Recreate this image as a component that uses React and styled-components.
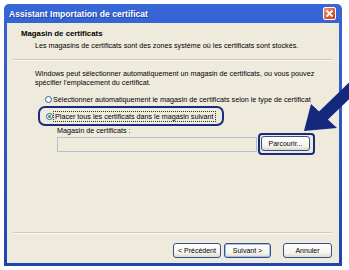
import React from "react";
import styled, { createGlobalStyle } from "styled-components";

const GlobalStyle = createGlobalStyle`
  html, body {
    margin: 0;
    padding: 0;
    background: #ffffff;
  }
  body {
    font-family: "Liberation Sans", Arial, sans-serif;
    font-size: 7.2px;
    color: #000;
  }
`;

const Stage = styled.div`
  position: relative;
  width: 349px;
  height: 270px;
  padding: 4px;
  box-sizing: border-box;
  overflow: hidden;
`;

const Window = styled.div`
  width: 338px;
  height: 262px;
  box-sizing: border-box;
  border-radius: 5px 5px 0 0;
  display: flex;
  flex-direction: column;
  padding: 0 3px 3px 3px;
  background: linear-gradient(#3766d6 0%, #2b56c6 50%, #1f45b4 100%);
`;

const TitleBar = styled.div`
  height: 19px;
  display: flex;
  align-items: center;
  justify-content: space-between;
  padding: 0 3px 0 2px;
`;

const Title = styled.span`
  color: #fff;
  font-weight: bold;
  font-size: 8.6px;
  text-shadow: 1px 1px 0 rgba(10, 30, 100, 0.5);
`;

const CloseButton = styled.div`
  width: 13px;
  height: 13px;
  box-sizing: border-box;
  border: 1px solid #fff;
  border-radius: 2px;
  background: linear-gradient(135deg, #f39a72, #dc5530 60%, #c8431f);
  display: flex;
  align-items: center;
  justify-content: center;
`;

const Body = styled.div`
  flex: 1;
  background: #eeebdd;
  display: flex;
  flex-direction: column;
`;

const Header = styled.div`
  height: 36px;
  box-sizing: border-box;
  padding: 6px 0 0 14px;
`;

const HeaderTitle = styled.div`
  font-weight: bold;
  font-size: 7.8px;
  line-height: 10px;
`;

const HeaderSub = styled.div`
  margin-top: 2px;
  padding-left: 14px;
  line-height: 10px;
`;

const Rule = styled.div`
  margin: 0 7px 0 6px;
  height: 1px;
  background: #cdcabb;
  border-bottom: 1px solid #fbfaf5;
`;

const Content = styled.div`
  flex: 1;
  padding: 8px 0 0 28px;
  display: flex;
  flex-direction: column;
`;

const Para = styled.p`
  margin: 0;
  line-height: 9px;
  width: 290px;
`;

const Options = styled.div`
  margin-top: 7px;
  display: flex;
  flex-direction: column;
  gap: 2px;
`;

const Option = styled.label`
  display: inline-flex;
  align-items: center;
  gap: 1px;
  align-self: flex-start;
  height: ${(p) => (p.$highlight ? "20px" : "10px")};
  box-sizing: border-box;
  margin-left: ${(p) => (p.$highlight ? "3px" : "10px")};
  padding: ${(p) => (p.$highlight ? "0 7px 0 6px" : "0")};
  border: ${(p) => (p.$highlight ? "2px solid #1a2b80" : "none")};
  border-radius: 7px;
  white-space: nowrap;
`;

const Radio = styled.span`
  width: 7px;
  height: 7px;
  box-sizing: border-box;
  border: 1px solid #2a5a9a;
  border-radius: 50%;
  background: #fff;
  display: flex;
  align-items: center;
  justify-content: center;
  &::after {
    content: "";
    width: 3px;
    height: 3px;
    border-radius: 50%;
    background: ${(p) => (p.$checked ? "#2aa52a" : "transparent")};
  }
`;

const FocusText = styled.span`
  outline: ${(p) => (p.$focus ? "1px dotted #333" : "none")};
  line-height: 9px;
  padding: 0 1px;
`;

const StoreBlock = styled.div`
  margin-left: 22px;
`;

const FieldLabel = styled.div`
  line-height: 10px;
`;

const FieldRow = styled.div`
  display: flex;
  align-items: center;
  gap: 1px;
  margin-top: 1px;
`;

const Input = styled.div`
  width: 200px;
  height: 15px;
  box-sizing: border-box;
  border: 1px solid #b3c0d4;
  background: #eeebdd;
`;

const Highlight = styled.div`
  border: 2px solid #1a2b80;
  border-radius: 4px;
  padding: 1px 3px 2px 1px;
  margin: -4px 0 -3px;
`;

const Button = styled.div`
  width: ${(p) => p.$w}px;
  height: 15px;
  box-sizing: border-box;
  border: 1px solid #36508a;
  border-radius: 3px;
  background: linear-gradient(#ffffff, #f4f3ee 70%, #dcd8cc);
  display: flex;
  align-items: center;
  justify-content: center;
  font-size: 7px;
  box-shadow: ${(p) => (p.$def ? "inset 0 0 0 1px #a6c0ec" : "none")};
`;

const Footer = styled.div`
  height: 29px;
  box-sizing: border-box;
  display: flex;
  justify-content: flex-end;
  align-items: flex-start;
  padding: 9px 7px 0 0;
  gap: 3px;
`;

const Spacer = styled.div`
  width: 6px;
`;

const Arrow = styled.svg`
  position: absolute;
  left: 296px;
  top: 74px;
`;

export default function App() {
  return (
    <>
      <GlobalStyle />
      <Stage>
        <Window>
          <TitleBar>
            <Title>Assistant Importation de certificat</Title>
            <CloseButton>
              <svg width="9" height="9" viewBox="0 0 9 9">
                <path d="M1.5 1.5 L7.5 7.5 M7.5 1.5 L1.5 7.5" stroke="#fff" strokeWidth="1.8" />
              </svg>
            </CloseButton>
          </TitleBar>
          <Body>
            <Header>
              <HeaderTitle>Magasin de certificats</HeaderTitle>
              <HeaderSub>
                Les magasins de certificats sont des zones système où les certificats sont stockés.
              </HeaderSub>
            </Header>
            <Rule />
            <Content>
              <Para>
                Windows peut sélectionner automatiquement un magasin de certificats, ou vous pouvez
                spécifier l'emplacement du certificat.
              </Para>
              <Options>
                <Option>
                  <Radio />
                  <span>Sélectionner automatiquement le magasin de certificats selon le type de certificat</span>
                </Option>
                <Option $highlight>
                  <Radio $checked />
                  <FocusText $focus>Placer tous les certificats dans le magasin suivant</FocusText>
                </Option>
              </Options>
              <StoreBlock>
                <FieldLabel>Magasin de certificats :</FieldLabel>
                <FieldRow>
                  <Input />
                  <Highlight>
                    <Button $w={49}>Parcourir...</Button>
                  </Highlight>
                </FieldRow>
              </StoreBlock>
            </Content>
            <Rule />
            <Footer>
              <Button $w={48}>&lt; Précédent</Button>
              <Button $w={47} $def>Suivant &gt;</Button>
              <Spacer />
              <Button $w={49}>Annuler</Button>
            </Footer>
          </Body>
        </Window>
        <Arrow width="53" height="64" viewBox="0 0 53 64">
          <line x1="27" y1="42" x2="58" y2="12" stroke="#14287e" strokeWidth="12" />
          <polygon points="8,57 15,30 41,54" fill="#14287e" />
        </Arrow>
      </Stage>
    </>
  );
}
